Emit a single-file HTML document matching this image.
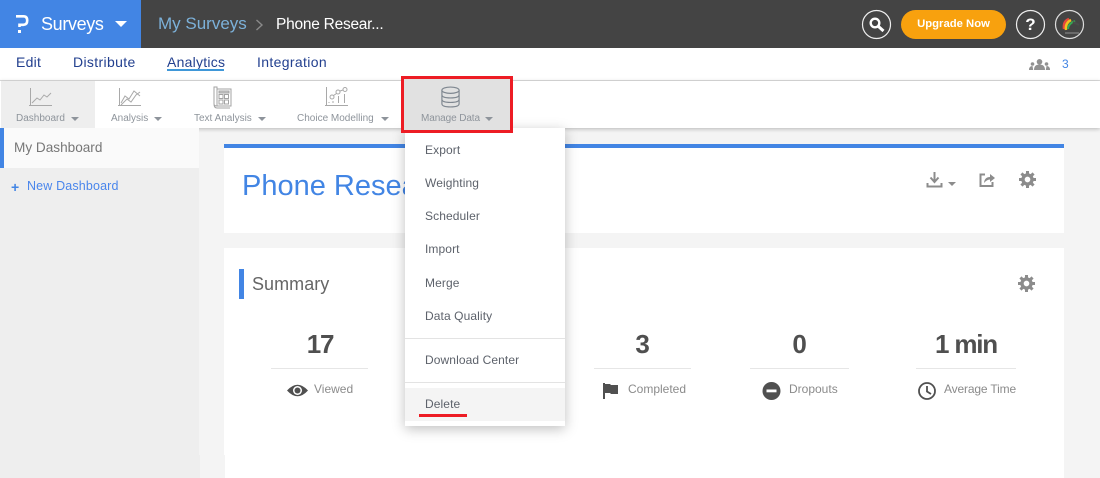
<!DOCTYPE html>
<html><head><meta charset="utf-8"><style>
*{box-sizing:border-box}
html,body{margin:0;padding:0;width:1100px;height:478px;overflow:hidden;background:#f4f4f4;font-family:"Liberation Sans",sans-serif}
.a{position:absolute}
.t{position:absolute;white-space:nowrap;line-height:1}
.tool{color:#8e949b;font-size:10px}
.nav{color:#23408f;font-size:14px;letter-spacing:.25px;top:55px}
.menu{color:#5d626b;font-size:12px;left:425px;letter-spacing:.1px}
.num{color:#4f4f4f;font-size:26px;font-weight:bold;top:331px;text-align:center;letter-spacing:-1.2px}
.lbl{color:#8b8b8b;font-size:12px;top:383px}
.hr{position:absolute;height:1px;background:#e6e6e6;top:368px}
.car{position:absolute;width:0;height:0;border-left:4px solid transparent;border-right:4px solid transparent;border-top:4px solid #8e949b;top:117px}
svg{position:absolute;overflow:visible}
</style></head><body>
<div class="a" style="left:0;top:0;width:1100px;height:48px;background:#444"></div>
<div class="a" style="left:0;top:0;width:141px;height:48px;background:#4285e4"></div>
<svg style="left:15px;top:14px" width="15" height="20" viewBox="0 0 15 20"><path d="M1 2.300H8.500Q12.200 2.300 12.200 6.500T8.500 10.800H4.500V13" fill="none" stroke="#fff" stroke-width="2.600"/><rect x="3" y="16" width="3" height="3" fill="#fff"/></svg>
<div class="t" style="left:41px;top:15px;color:#fff;font-size:18px;letter-spacing:-.35px">Surveys</div>
<div class="a" style="left:115px;top:21px;width:0;height:0;border-left:6px solid transparent;border-right:6px solid transparent;border-top:6px solid #fff"></div>
<div class="t" style="left:158px;top:15px;color:#7cb1d9;font-size:17px">My Surveys</div>
<svg style="left:255px;top:18px" width="10" height="14"><path d="M1.500 2L7 7L1.500 12" fill="none" stroke="#8a8a8a" stroke-width="1.400"/></svg>
<div class="t" style="left:276px;top:17px;color:#fff;font-size:15.500px;letter-spacing:-.25px">Phone Resear...</div>
<svg style="left:862px;top:10px" width="30" height="30"><circle cx="14.500" cy="14.500" r="14" fill="none" stroke="#eee" stroke-width="1.200"/><circle cx="13" cy="13" r="4.300" fill="none" stroke="#fff" stroke-width="2.400"/><path d="M16.500 16.500L21.500 21" stroke="#fff" stroke-width="3"/></svg>
<div class="a" style="left:901px;top:10px;width:105px;height:29px;border-radius:15px;background:#f8a10e"></div>
<div class="t" style="left:901px;top:19px;width:105px;text-align:center;color:#fff;font-size:11.300px;font-weight:bold">Upgrade Now</div>
<svg style="left:1016px;top:10px" width="30" height="30"><circle cx="14.500" cy="14.500" r="14" fill="none" stroke="#eee" stroke-width="1.200"/></svg>
<div class="t" style="left:1016px;top:16px;width:29px;text-align:center;color:#fff;font-size:17px;font-weight:bold">?</div>
<svg style="left:1055px;top:10px" width="30" height="30"><circle cx="14.500" cy="14.500" r="14" fill="none" stroke="#ddd" stroke-width="1.200"/><path d="M9 19Q8 11 14 9" fill="none" stroke="#e8483c" stroke-width="2.500"/><path d="M11 20Q10 13 16 10" fill="none" stroke="#f4c020" stroke-width="2.500"/><path d="M13 19Q13 14 20 11" fill="none" stroke="#35a853" stroke-width="2"/><path d="M18 12L24 15" stroke="#4a4a4a" stroke-width="2"/><path d="M10 23H24" stroke="#777" stroke-width="1.500"/></svg>

<div class="a" style="left:0;top:48px;width:1100px;height:33px;background:#fff;border-bottom:1px solid #ddd"></div>
<div class="t nav" style="left:16px">Edit</div>
<div class="t nav" style="left:73px;letter-spacing:.35px">Distribute</div>
<div class="t nav" style="left:167px">Analytics</div>
<div class="a" style="left:167px;top:69px;width:57px;height:2px;background:#3f97d8"></div>
<div class="t nav" style="left:257px;letter-spacing:.35px">Integration</div>
<svg style="left:1029px;top:59px" width="21" height="11" fill="#919191"><circle cx="10.500" cy="2.800" r="2.800"/><path d="M5 11Q5 5.500 10.500 5.500T16 11Z"/><circle cx="3.500" cy="5" r="1.800"/><circle cx="17.500" cy="5" r="1.800"/><path d="M0 11Q0 7 3.500 7L4.200 11ZM21 11Q21 7 17.500 7L16.800 11Z"/></svg>
<div class="t" style="left:1062px;top:58px;color:#4285e4;font-size:12px">3</div>

<div class="a" style="left:0;top:81px;width:1100px;height:47px;background:#fff;box-shadow:0 1px 4px rgba(0,0,0,.25)"></div>
<div class="a" style="left:1px;top:81px;width:94px;height:47px;background:#eee"></div>
<svg style="left:29px;top:87px" width="24" height="20" fill="none" stroke="#a9a9a9" stroke-width="1"><path d="M1.500 1V19M0 18.500H23"/><path d="M3 16L8 11L11 13L15 8L18 10L22 6"/></svg>
<svg style="left:118px;top:87px" width="24" height="20" fill="none" stroke="#a9a9a9" stroke-width="1"><path d="M1.500 1V19M0 18.500H23"/><path d="M3 16L7 9L11 12L16 4L22 9M3 18L9 12L13 15L18 8L22 5"/></svg>
<svg style="left:213px;top:86px" width="20" height="23" fill="none" stroke="#a3a3a3" stroke-width="1"><path d="M1 1H4V20Q1 20 1 18ZM4 3H18V20H4M1 18Q1 22 4 22H17"/><rect x="6" y="5" width="10" height="2" fill="#ccc"/><rect x="6" y="8.500" width="4" height="4"/><rect x="11.500" y="8.500" width="4" height="4"/><rect x="6" y="14" width="4" height="4"/><rect x="11.500" y="14" width="4" height="4"/></svg>
<svg style="left:325px;top:86px" width="24" height="21" fill="none" stroke="#a9a9a9" stroke-width="1"><path d="M1.500 1V20M0 19.500H23"/><circle cx="7" cy="11" r="2"/><circle cx="13" cy="6" r="2"/><circle cx="20" cy="3.500" r="2"/><path d="M8.500 9.500L11.500 7.500M15 5L18 4M19.500 8V17M13.500 10V17M8 15V17M4 16V17"/></svg>
<div class="t tool" style="left:16px;top:114px">Dashboard</div><div class="car" style="left:71px"></div>
<div class="t tool" style="left:111px;top:114px">Analysis</div><div class="car" style="left:154px"></div>
<div class="t tool" style="left:194px;top:114px">Text Analysis</div><div class="car" style="left:258px"></div>
<div class="t tool" style="left:297px;top:114px">Choice Modelling</div><div class="car" style="left:381px"></div>

<div class="a" style="left:0;top:128px;width:199px;height:350px;background:#eee"></div>
<div class="a" style="left:0;top:128px;width:199px;height:40px;background:#fafafa;border-left:4px solid #4285e4"></div>
<div class="t" style="left:14px;top:141px;color:#777;font-size:13.600px">My Dashboard</div>
<div class="t" style="left:11px;top:180px;color:#4285e4;font-size:14px;font-weight:bold">+</div>
<div class="t" style="left:27px;top:180px;color:#4a86ec;font-size:12.500px;letter-spacing:.15px">New Dashboard</div>

<div class="a" style="left:224px;top:144px;width:840px;height:89px;background:#fff;border-top:4px solid #4285e4"></div>
<div class="t" style="left:242px;top:172px;color:#4285e4;font-size:29px">Phone Research</div>
<svg style="left:926px;top:171px" width="20" height="18" fill="none" stroke="#8c8c8c" stroke-width="2"><path d="M8.500 1V10M4.500 6.500L8.500 11L12.500 6.500"/><path d="M1.500 12V15.500H15.500V12"/></svg>
<div class="car" style="left:948px;top:182px;border-top-color:#8c8c8c"></div>
<svg style="left:979px;top:172px" width="17" height="16" fill="none" stroke="#8c8c8c" stroke-width="2"><path d="M6 2.500H1.500V14H13.500V10"/><path d="M5 11Q5.500 5 11 5V2L16 6L11 10V7.500Q8 7.500 5 11Z" fill="#8c8c8c" stroke="none"/></svg>
<svg style="left:1019px;top:171px" width="17" height="17" viewBox="0 0 18 18"><circle cx="9" cy="9" r="4.800" fill="none" stroke="#8c8c8c" stroke-width="3.600"/><path d="M9 0V3M9 15V18M0 9H3M15 9H18M2.600 2.600L4.700 4.700M13.300 13.300L15.400 15.400M15.400 2.600L13.300 4.700M4.700 13.300L2.600 15.400" stroke="#8c8c8c" stroke-width="3.200"/></svg>

<div class="a" style="left:224px;top:248px;width:840px;height:230px;background:#fff"></div>
<div class="a" style="left:199px;top:455px;width:1px;height:23px;background:#eee"></div>
<div class="a" style="left:224px;top:455px;width:1px;height:23px;background:#f4f4f4"></div>
<div class="a" style="left:239px;top:269px;width:5px;height:30px;background:#4285e4"></div>
<div class="t" style="left:252px;top:275px;color:#666;font-size:18px;letter-spacing:.05px">Summary</div>
<svg style="left:1018px;top:275px" width="17" height="17" viewBox="0 0 18 18"><circle cx="9" cy="9" r="4.800" fill="none" stroke="#8c8c8c" stroke-width="3.600"/><path d="M9 0V3M9 15V18M0 9H3M15 9H18M2.600 2.600L4.700 4.700M13.300 13.300L15.400 15.400M15.400 2.600L13.300 4.700M4.700 13.300L2.600 15.400" stroke="#8c8c8c" stroke-width="3.200"/></svg>

<div class="t num" style="left:270px;width:100px">17</div>
<div class="hr" style="left:271px;width:97px"></div>
<svg style="left:287px;top:383px" width="21" height="15"><path d="M0 7.500Q10.500 -4 21 7.500Q10.500 19 0 7.500Z" fill="#505050"/><circle cx="10.500" cy="7.500" r="4.500" fill="#fff"/><circle cx="10.500" cy="7.500" r="3" fill="#505050"/></svg>
<div class="t lbl" style="left:314px">Viewed</div>

<div class="t num" style="left:592px;width:100px">3</div>
<div class="hr" style="left:594px;width:97px"></div>
<svg style="left:603px;top:383px" width="16" height="16" fill="#505050"><rect x="0" y="0" width="2" height="16"/><path d="M2 1H7L8 2H15V11H8L7 10H2Z"/></svg>
<div class="t lbl" style="left:628px">Completed</div>

<div class="t num" style="left:749px;width:100px">0</div>
<div class="hr" style="left:750px;width:99px"></div>
<svg style="left:762px;top:382px" width="19" height="18"><circle cx="9.500" cy="9" r="9" fill="#505050"/><rect x="4.500" y="7.500" width="10" height="2.800" fill="#fff"/></svg>
<div class="t lbl" style="left:789px">Dropouts</div>

<div class="t num" style="left:916px;width:100px">1 min</div>
<div class="hr" style="left:916px;width:100px"></div>
<svg style="left:918px;top:382px" width="18" height="18" fill="none" stroke="#505050" stroke-width="1.800"><circle cx="9" cy="9" r="8"/><path d="M9 4V9.500L13 12"/></svg>
<div class="t lbl" style="left:944px;letter-spacing:-.15px">Average Time</div>

<div class="a" style="left:405px;top:128px;width:160px;height:298px;background:#fff;box-shadow:0 3px 12px rgba(0,0,0,.25)"></div>
<div class="t menu" style="top:144px">Export</div>
<div class="t menu" style="top:177px">Weighting</div>
<div class="t menu" style="top:210px">Scheduler</div>
<div class="t menu" style="top:243px">Import</div>
<div class="t menu" style="top:277px">Merge</div>
<div class="t menu" style="top:310px">Data Quality</div>
<div class="a" style="left:405px;top:338px;width:160px;height:1px;background:#e3e3e3"></div>
<div class="t menu" style="top:354px">Download Center</div>
<div class="a" style="left:405px;top:382px;width:160px;height:1px;background:#e3e3e3"></div>
<div class="a" style="left:405px;top:388px;width:160px;height:33px;background:#f4f4f4"></div>
<div class="t menu" style="top:398px">Delete</div>
<div class="a" style="left:419px;top:414px;width:48px;height:3px;background:#ed1c24"></div>

<div class="a" style="left:404px;top:79px;width:106px;height:51px;background:#e1e1e1"></div>
<svg style="left:441px;top:86px" width="19" height="22" fill="none" stroke="#7f8790" stroke-width="1.300" viewBox="0 0 21 24"><ellipse cx="10.500" cy="4.500" rx="9.500" ry="3.500"/><path d="M1 4.500V19.500Q1 23 10.500 23T20 19.500V4.500M1 9.500Q1 13 10.500 13T20 9.500M1 14.500Q1 18 10.500 18T20 14.500"/></svg>
<div class="t tool" style="left:421px;top:114px;letter-spacing:-.1px">Manage Data</div><div class="car" style="left:485px"></div>
<div class="a" style="left:401px;top:76px;width:112px;height:57px;border:3px solid #ed1c24"></div>
</body></html>
